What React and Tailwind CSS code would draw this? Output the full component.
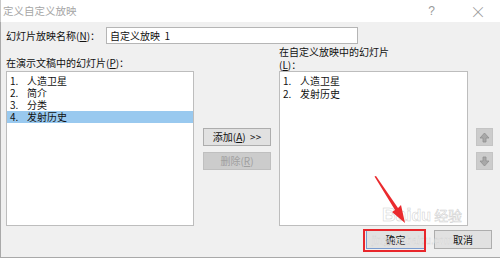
import React from "react";

const F = { fontFamily: '"Noto Sans CJK SC", "Noto Sans", sans-serif' };

function U({ children }) {
  return <span className="underline underline-offset-1">{children}</span>;
}

function ArrowIcon({ down }) {
  return (
    <svg width="11" height="11" viewBox="0 0 11 11">
      <path
        d={down ? "M4 1 H7 V5 H10 L5.5 10 L1 5 H4 Z" : "M4 10 H7 V6 H10 L5.5 1 L1 6 H4 Z"}
        fill="#a8a8a8"
        stroke="#8f8f8f"
        strokeWidth="0.8"
      />
    </svg>
  );
}

export default function App() {
  return (
    <div className="relative w-[500px] h-[258px] overflow-hidden bg-[#f0f0f0] text-[10px] text-[#111]" style={F}>
      {/* title bar */}
      <div className="h-[22px] bg-white flex items-center border-l border-[#c8c8c8]">
        <span className="ml-[2px] text-[#a6a6a6] text-[10.5px] leading-none">定义自定义放映</span>
        <span className="ml-auto text-[#9a9a9a] text-[12px] leading-none mr-[35px]" style={{ fontFamily: '"Liberation Sans", sans-serif' }}>?</span>
        <span className="text-[#9a9a9a] text-[16px] leading-none mr-[14px] font-light">×</span>
      </div>
      {/* body */}
      <div className="h-[236px] border-l border-b border-[#a9a9a9] pl-[5px] pt-[5px] flex flex-col">
        <div className="flex items-center h-[17px]">
          <span className="w-[100px] leading-none whitespace-nowrap">幻灯片放映名称(<U>N</U>)：</span>
          <div className="w-[252px] h-[17px] bg-white border border-[#b5b5b5] flex items-center pl-[3px] leading-none whitespace-nowrap">自定义放映&nbsp;&nbsp;1</div>
        </div>
        <div className="flex items-end mt-[1px]">
          {/* left column */}
          <div className="flex flex-col w-[188px]">
            <div className="leading-[13px] mb-[2px] whitespace-nowrap">在演示文稿中的幻灯片(<U>P</U>)：</div>
            <div className="h-[155px] bg-white border border-[#bdbdbd] pt-[3px] leading-[12px]">
              <div className="flex h-[12px] items-center"><span className="w-[20px] pl-[3px]">1.</span>人造卫星</div>
              <div className="flex h-[12px] items-center"><span className="w-[20px] pl-[3px]">2.</span>简介</div>
              <div className="flex h-[12px] items-center"><span className="w-[20px] pl-[3px]">3.</span>分类</div>
              <div className="flex h-[12px] items-center bg-[#99c9ef]"><span className="w-[20px] pl-[3px]">4.</span>发射历史</div>
            </div>
          </div>
          {/* middle buttons */}
          <div className="w-[68px] ml-[9px] mr-[8px] self-stretch flex flex-col pt-[83px] gap-[6px]">
            <div className="h-[18px] bg-[#e1e1e1] border border-[#adadad] flex items-center justify-center leading-none whitespace-nowrap">
              添加(<U>A</U>)&nbsp;&nbsp;&gt;&gt;
            </div>
            <div className="h-[18px] bg-[#cccccc] border border-[#bfbfbf] flex items-center justify-center leading-none text-[#a0a0a0] whitespace-nowrap">
              删除(<U>R</U>)
            </div>
          </div>
          {/* right column */}
          <div className="flex flex-col w-[189px]">
            <div className="leading-[13px] whitespace-nowrap">
              在自定义放映中的幻灯片
              <br />(<U>L</U>)：
            </div>
            <div className="h-[155px] bg-white border border-[#bdbdbd] pt-[3px] leading-[12px]">
              <div className="flex h-[12px] items-center"><span className="w-[20px] pl-[3px]">1.</span>人造卫星</div>
              <div className="flex h-[13px] items-center"><span className="w-[20px] pl-[3px]">2.</span>发射历史</div>
            </div>
          </div>
          {/* up/down */}
          <div className="ml-[8px] self-stretch flex flex-col pt-[83px] gap-[6px]">
            <div className="w-[17px] h-[18px] bg-[#cccccc] border border-[#c4c4c4] flex items-center justify-center">
              <ArrowIcon />
            </div>
            <div className="w-[17px] h-[18px] bg-[#cccccc] border border-[#c4c4c4] flex items-center justify-center">
              <ArrowIcon down />
            </div>
          </div>
        </div>
        {/* bottom buttons */}
        <div className="flex justify-end mt-[4px] mr-[8px] gap-[9px]">
          <div className="w-[59px] h-[19px] bg-[#e1e1e1] border border-[#7a9ccf] flex items-center justify-center leading-none">确定</div>
          <div className="w-[58px] h-[19px] bg-[#e1e1e1] border border-[#adadad] flex items-center justify-center leading-none">取消</div>
        </div>
      </div>

      {/* watermark */}
      <div className="absolute left-[382px] top-[205px] text-[19px] font-bold leading-none text-white/60" style={{ fontFamily: '"Liberation Sans", sans-serif', WebkitTextStroke: "0.5px #cfcfcf" }}>
        Bai<span className="text-[16px]">du</span><span className="text-[14px] font-normal ml-[3px]" style={F}>经验</span>
      </div>
      <div className="absolute left-[372px] top-[236px] text-[10px] leading-none text-white/50" style={{ fontFamily: '"Liberation Sans", sans-serif', WebkitTextStroke: "0.3px #cfcfcf" }}>
        jingyan.baidu.com
      </div>

      {/* red annotation */}
      <div className="absolute left-[363px] top-[229px] w-[63px] h-[23px] border-2 border-[#e8262b]" />
      <svg className="absolute left-0 top-0" width="500" height="258" viewBox="0 0 500 258">
        <path d="M374.5 176.5 L376 176 L398 208 L401 205 L405 223 L392 212 L395 210 Z" fill="#ea2a2e" />
      </svg>
    </div>
  );
}
